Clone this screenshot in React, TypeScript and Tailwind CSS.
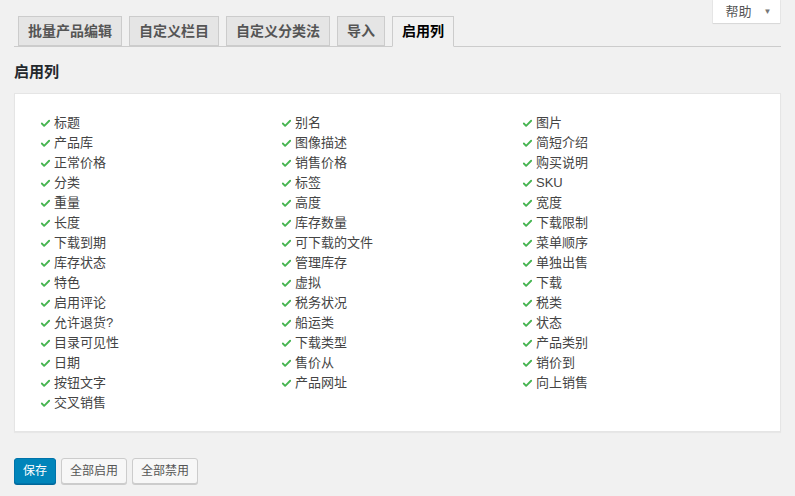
import { Check } from 'lucide-react'

const TABS = ['批量产品编辑', '自定义栏目', '自定义分类法', '导入', '启用列']

const COLUMNS = [
  '标题', '别名', '图片',
  '产品库', '图像描述', '简短介绍',
  '正常价格', '销售价格', '购买说明',
  '分类', '标签', 'SKU',
  '重量', '高度', '宽度',
  '长度', '库存数量', '下载限制',
  '下载到期', '可下载的文件', '菜单顺序',
  '库存状态', '管理库存', '单独出售',
  '特色', '虚拟', '下载',
  '启用评论', '税务状况', '税类',
  '允许退货?', '船运类', '状态',
  '目录可见性', '下载类型', '产品类别',
  '日期', '售价从', '销价到',
  '按钮文字', '产品网址', '向上销售',
  '交叉销售',
]

export default function App() {
  return (
    <div
      className="relative min-h-[496px] w-full bg-[#f1f1f1] px-[14px] text-[#444]"
      style={{ fontFamily: '"Liberation Sans", "Noto Sans CJK SC", sans-serif' }}
    >
      {/* Help tab */}
      <div className="absolute right-[15px] top-0 flex h-[23px] w-[67px] items-center justify-center gap-[12px] bg-white pl-[4px] text-[13px] text-[#555] shadow-[0_0_0_1px_rgba(0,0,0,0.04),0_1px_1px_rgba(0,0,0,0.06)]">
        <span>帮助</span>
        <span className="text-[8px] text-[#777]">▼</span>
      </div>

      {/* Tabs */}
      <div className="flex gap-[7px] border-b border-[#ccc] pl-[4px] pt-[16px]">
        {TABS.map((t, i) => {
          const active = i === TABS.length - 1
          return (
            <div
              key={t}
              className={
                active
                  ? '-mb-px flex h-[31px] items-center border border-[#ccc] border-b-[#f1f1f1] bg-[#f1f1f1] px-[9px] text-[14px] font-bold text-black'
                  : 'flex h-[30px] items-center border border-[#ccc] bg-[#e5e5e5] px-[9px] text-[14px] font-semibold text-[#555]'
              }
            >
              {t}
            </div>
          )
        })}
      </div>

      <h2 className="mt-[15px] text-[15px] font-bold leading-[20px] text-[#23282d]">启用列</h2>

      {/* Panel */}
      <div className="mt-[11px] border border-[#e5e5e5] bg-white pb-[18px] pl-[25px] pt-[19px] shadow-[0_1px_1px_rgba(0,0,0,0.04)]">
        <div className="grid grid-cols-[241px_241px_241px]">
          {COLUMNS.map((c) => (
            <div key={c} className="flex h-[20px] items-center gap-[3px] text-[13px] text-[#444]">
              <Check className="h-[11px] w-[11px] text-[#46b450]" strokeWidth={4} />
              <span>{c}</span>
            </div>
          ))}
        </div>
      </div>

      {/* Actions */}
      <div className="mt-[26px] flex gap-[5px]">
        <button className="h-[26px] rounded-[3px] border border-[#0073aa] bg-[#0085ba] px-[8px] text-[12px] text-white shadow-[0_1px_0_#006799]">
          保存
        </button>
        <button className="h-[26px] rounded-[3px] border border-[#ccc] bg-[#f7f7f7] px-[8px] text-[12px] text-[#555] shadow-[0_1px_0_#ccc]">
          全部启用
        </button>
        <button className="h-[26px] rounded-[3px] border border-[#ccc] bg-[#f7f7f7] px-[8px] text-[12px] text-[#555] shadow-[0_1px_0_#ccc]">
          全部禁用
        </button>
      </div>
    </div>
  )
}
